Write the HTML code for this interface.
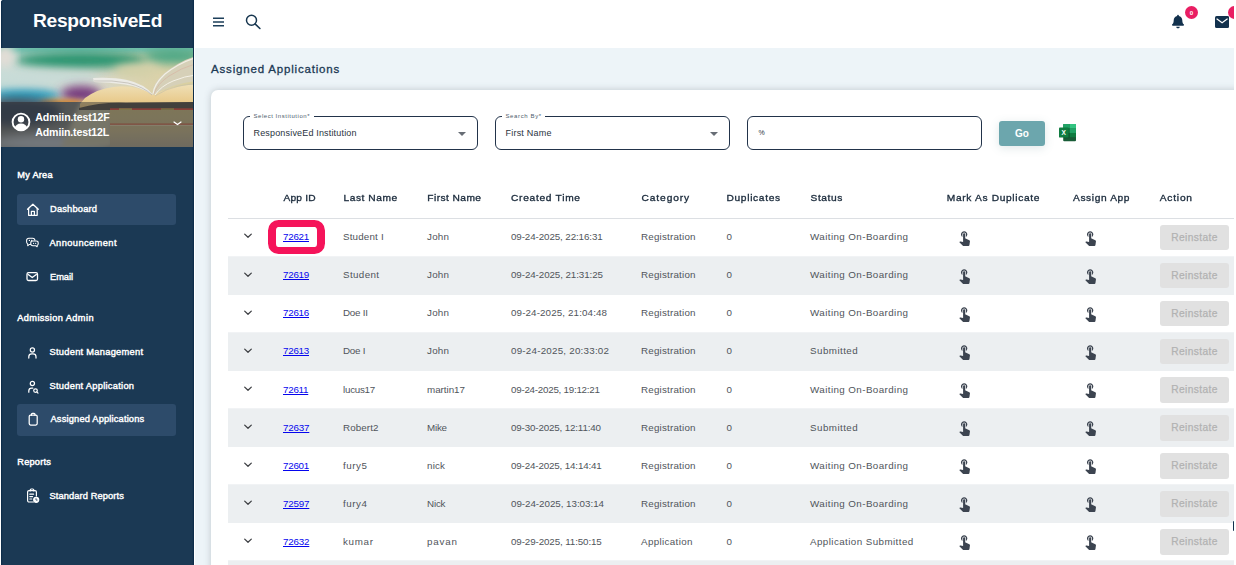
<!DOCTYPE html>
<html lang="en">
<head>
<meta charset="utf-8">
<title>Assigned Applications</title>
<style>
*{box-sizing:border-box;margin:0;padding:0}
html,body{width:1236px;height:565px;overflow:hidden;background:#fff;font-family:"Liberation Sans",sans-serif;}
body{position:relative}
#side{position:absolute;left:1px;top:0;width:193px;height:565px;background:#1b3954;border-top-left-radius:2.5px;overflow:hidden;box-shadow:inset 1.2px 0 0 #0e2d4a,inset -1.2px 0 0 #0e2d4a}
#brand{position:absolute;left:0;top:0;width:193px;height:48px;color:#fff;font-weight:700;font-size:19.2px;line-height:24px;text-align:center;padding-top:9px;white-space:nowrap}
#photo{position:absolute;left:0;top:48px;width:192px;height:99px;overflow:hidden}
#photo svg{position:absolute;left:0;top:0}
.uname{position:absolute;left:34.3px;color:#fff;font-weight:700;font-size:10.6px;line-height:12px;white-space:nowrap}
.slabel{position:absolute;left:16.3px;margin-top:1px;color:#fff;font-weight:400;-webkit-text-stroke:0.45px #fff;font-size:9.2px;line-height:10px;white-space:nowrap}
.sitem{position:absolute;left:16px;width:159px;height:31px;border-radius:3px;color:#fff;font-size:9.3px;font-weight:400;-webkit-text-stroke:0.4px #fff;line-height:31px;white-space:nowrap}
.sitem.on{background:#2d4b6a}
.sitem > span{position:absolute;left:33px;top:0}
.sitem svg{position:absolute;left:8px;top:8px;width:15px;height:15px;overflow:visible}
#top{position:absolute;left:194px;top:0;width:1040px;height:48px;background:#fff}
#main{position:absolute;left:195px;top:47.5px;width:1039px;height:518px;background:#edf4f8;overflow:hidden}
#title{position:absolute;left:211px;top:61.2px;font-size:11.5px;line-height:16px;color:#1b3954;font-weight:400;-webkit-text-stroke:0.3px #1b3954;white-space:nowrap}
#card{position:absolute;left:16px;top:42.5px;width:1040px;height:490px;background:#fff;border-radius:7px;box-shadow:0 0 7px rgba(95,105,115,0.32)}
.fld{position:absolute;top:116px;height:34px;border:1.3px solid #22334a;border-radius:6px;background:#fff}
.fld .lab{position:absolute;left:6px;top:-5.5px;background:#fff;padding:0 3.5px;font-size:6px;line-height:8px;color:#4d5c6c;white-space:nowrap}
.fld .val{position:absolute;left:9.5px;top:9.5px;font-size:9px;line-height:12px;color:#2a3340;white-space:nowrap}
.fld .car{position:absolute;margin-left:-1px;top:14.9px;width:0;height:0;border-left:4px solid transparent;border-right:4px solid transparent;border-top:4px solid #676d75}
#go{position:absolute;left:999px;top:121px;width:46px;height:25px;background:#6ca6ad;border-radius:3px;color:#fff;font-weight:700;font-size:10px;line-height:25px;text-align:center;box-shadow:0 2px 10px rgba(80,120,130,0.18)}
.th{position:absolute;top:191.3px;font-size:10.2px;line-height:14px;transform:scaleY(0.9);transform-origin:0 10.6px;color:#1b2b3c;font-weight:400;-webkit-text-stroke:0.35px #1b2b3c;white-space:nowrap}
#hline{position:absolute;left:228px;top:218px;width:1006px;height:1.2px;background:#dcdfe3}
.row{position:absolute;left:228px;width:1006px;height:38px;font-size:9.8px;line-height:37.6px;color:#50555b;white-space:nowrap}
.rbg{position:absolute;left:228px;width:1006px;height:38.8px;background:#eceff1;border-top:1.4px solid #f1f3f5}
.row .c{position:absolute;top:0}
.row a{color:#0505ee;text-decoration:underline;text-decoration-thickness:0.9px;text-underline-offset:1px}
.row .btn{position:absolute;left:932px;top:6.4px;width:69px;height:25.6px;background:#e1e1e1;border-radius:3px;color:#b2b2b2;font-size:10.2px;line-height:25.2px;text-align:center;font-weight:400;-webkit-text-stroke:0.25px #b2b2b2}
.row svg.chev{position:absolute;left:15px;top:14.1px;width:10px;height:8px}
.row svg.hand{position:absolute;top:10.2px;width:17px;height:17px}
#hl{position:absolute;left:268.4px;top:219.6px;width:56.2px;height:34.6px;border:7.4px solid #f5145a;border-left-width:8px;border-right-width:8px;border-radius:10.5px}
</style>
</head>
<body>
<div id="side">
  <div id="brand"><span style="letter-spacing:-0.250px">ResponsiveEd</span></div>
  <div id="photo">
    <svg width="193" height="99" viewBox="0 0 193 99">
      <defs>
        <filter id="b6" x="-30%" y="-80%" width="160%" height="260%"><feGaussianBlur stdDeviation="5"/></filter>
        <filter id="b3" x="-30%" y="-80%" width="160%" height="260%"><feGaussianBlur stdDeviation="2.600"/></filter>
        <filter id="b1" x="-10%" y="-30%" width="120%" height="160%"><feGaussianBlur stdDeviation="0.700"/></filter>
        <linearGradient id="pg" x1="0" y1="0" x2="1" y2="0">
          <stop offset="0" stop-color="#c9dcd7"/><stop offset="0.450" stop-color="#d6d8cf"/><stop offset="0.750" stop-color="#dcd3ae"/><stop offset="1" stop-color="#d9cf9f"/>
        </linearGradient>
        <linearGradient id="pcream" x1="0" y1="0" x2="0" y2="1">
          <stop offset="0" stop-color="#efe0b8"/><stop offset="1" stop-color="#e6c27c"/>
        </linearGradient>
        <linearGradient id="pstack" x1="0" y1="0" x2="0" y2="1">
          <stop offset="0" stop-color="#c6b47a"/><stop offset="0.550" stop-color="#bfae80"/><stop offset="1" stop-color="#a99e86"/>
        </linearGradient>
        <clipPath id="pc"><rect width="193" height="99"/></clipPath>
      </defs>
      <g clip-path="url(#pc)">
      <rect width="193" height="99" fill="url(#pg)"/>
      <rect x="-5" y="-4" width="203" height="9" fill="#6fc0ae" filter="url(#b3)"/>
      <ellipse cx="80" cy="12" rx="66" ry="8.500" fill="#2a9470" filter="url(#b6)"/>
      <ellipse cx="172" cy="8" rx="30" ry="8" fill="#4fa886" filter="url(#b6)"/>
      <ellipse cx="4" cy="8" rx="10" ry="12" fill="#e2ddd6" filter="url(#b6)"/>
      <ellipse cx="135" cy="23" rx="22" ry="7" fill="#d3d0a8" filter="url(#b6)"/>
      <ellipse cx="24" cy="48" rx="36" ry="7.500" fill="#2a9fc0" filter="url(#b6)"/><ellipse cx="40" cy="30" rx="60" ry="6" fill="#c7dcd8" filter="url(#b6)"/>
      <ellipse cx="80" cy="46" rx="20" ry="8" fill="#74397c" filter="url(#b6)"/>
      <ellipse cx="62" cy="55" rx="24" ry="4" fill="#d58b35" filter="url(#b3)"/>
      <rect x="-5" y="54" width="120" height="50" fill="#7a7a74"/>
      <ellipse cx="15" cy="64" rx="46" ry="14" fill="#3d4a58" filter="url(#b6)"/>
      <ellipse cx="50" cy="95" rx="60" ry="9" fill="#b4b8ba" filter="url(#b6)"/><path d="M80 54 L112 54 L112 99 L60 99 Z" fill="#b9b296" filter="url(#b3)"/>
      <!-- book page -->
      <path d="M79 56 L84 50 Q96 41 112 39 Q135 36 152 47 Q170 38 195 36 L195 60 L79 60 Z" fill="url(#pcream)" filter="url(#b1)"/>
      <!-- left pages swoosh -->
      <path d="M92 30 Q112 29 126 32 Q144 36 152 47 Q140 39 124 36.500 Q108 34 93 34 Z" fill="#ecebe6" filter="url(#b1)"/>
      <path d="M93 33 Q112 32 127 35 Q143 39 151 47" fill="none" stroke="#b9b5ae" stroke-width="0.700"/>
      <!-- right fanned pages -->
      <path d="M152 47 Q150 38 160 28 Q176 14 195 8 L195 33 Q170 36 152 47 Z" fill="#d6d0b8" filter="url(#b1)"/>
      <path d="M152 46 Q153 36 164 26 Q178 15 194 10" fill="none" stroke="#f1efe6" stroke-width="1.200"/>
      <path d="M153 46 Q156 36 168 28 Q180 20 194 16" fill="none" stroke="#d7b9a6" stroke-width="0.800"/>
      <path d="M154 47 Q160 38 172 33 Q184 28 195 27" fill="none" stroke="#f3f0e6" stroke-width="1"/>
      <path d="M154 48 Q164 41 178 38 Q188 36 195 36" fill="none" stroke="#c9c2a8" stroke-width="0.700"/>
      <!-- book block below pages -->
      <path d="M78 60 Q100 54 125 55 L195 54 L195 62 L78 62 Z" fill="#5a5346"/>
      <rect x="109" y="61" width="90" height="40" fill="url(#pstack)"/>
      <rect x="109" y="60.300" width="90" height="1.700" fill="#d9503f"/><rect x="118" y="60.300" width="13" height="1.700" fill="#c9b25a"/><rect x="160" y="60.300" width="13" height="1.700" fill="#b9a552"/>
      <rect x="109" y="75.600" width="90" height="1.200" fill="#c8543a"/>
      <rect x="109" y="76.800" width="90" height="0.900" fill="#d9cca6"/>
      <rect x="0" y="54" width="193" height="45" fill="#262b31" fill-opacity="0.450"/>
      </g>
    </svg>

  </div>
  <svg style="position:absolute;left:9.600px;top:112.300px" width="20" height="20" viewBox="0 0 20 20"><defs><clipPath id="avc"><circle cx="10" cy="10" r="8.600"/></clipPath></defs><circle cx="10" cy="10" r="8.400" fill="none" stroke="#fff" stroke-width="1.900"/><circle cx="10" cy="7.200" r="3.200" fill="#fff"/><ellipse cx="10" cy="16.600" rx="6.200" ry="5" fill="#fff" clip-path="url(#avc)"/></svg>
  <div class="uname" style="top:111.4px"><span style="letter-spacing:-0.118px">Admiin.test12F</span></div>
  <div class="uname" style="top:125.6px"><span style="letter-spacing:-0.149px">Admiin.test12L</span></div>
  <svg style="position:absolute;left:171.700px;top:121.300px" width="9" height="5" viewBox="0 0 9 5"><path d="M1 1 L4.500 3.600 L8 1" fill="none" stroke="#fff" stroke-width="1.250" stroke-linecap="round" stroke-linejoin="round"/></svg>

  <div class="slabel" style="top:169px"><span style="letter-spacing:0.266px">My Area</span></div>
  <div class="sitem on" style="top:194px"><svg viewBox="0 0 15 15" fill="none" stroke="#fff" stroke-width="1.250" stroke-linejoin="round" stroke-linecap="round"><path d="M2.500 7.300 L7.900 2.200 L13.300 7.300"/><path d="M3.600 6.300 V13.300 H12.200 V6.300"/><path d="M6.400 13.300 V9.300 H9.400 V13.300"/></svg><span><span style="letter-spacing:0.189px">Dashboard</span></span></div>
  <div class="sitem" style="top:228px"><svg viewBox="0 0 15 15" fill="none" stroke="#fff" stroke-width="1.150" stroke-linejoin="round" stroke-linecap="round"><g transform="translate(0.700 -0.300) scale(0.920 0.840)"><path d="M5.300 10.500 H3.800 L2.200 12 V9.800 C1.400 9.300 1 8.400 1 7.500 V5.500 C1 4.100 2.100 3 3.500 3 H7.500 C8.900 3 10 4.100 10 5.500"/><path d="M7.800 6.300 H11.300 C12.600 6.300 13.600 7.300 13.600 8.600 V9.600 C13.600 10.500 13.200 11.200 12.500 11.600 V13.300 L11 12 H7.800 C6.500 12 5.500 11 5.500 9.700 V8.600 C5.500 7.300 6.500 6.300 7.800 6.300 Z"/><path d="M4 5.600h.1M6.500 5.600h.1M8.500 9.100h.1M10.800 9.100h.1" stroke-width="1.300"/></g></svg><span style="left:32.500px"><span style="letter-spacing:0.405px">Announcement</span></span></div>
  <div class="sitem" style="top:261.5px"><svg viewBox="0 0 15 15" fill="none" stroke="#fff" stroke-width="1.300" stroke-linejoin="round" stroke-linecap="round"><rect x="2" y="2.700" width="10.500" height="7.800" rx="1.500"/><path d="M3.200 4.500 L7.250 7.500 L11.300 4.500"/></svg><span><span style="letter-spacing:-0.037px">Email</span></span></div>
  <div class="slabel" style="top:312px"><span style="letter-spacing:0.409px">Admission Admin</span></div>
  <div class="sitem" style="top:337px"><svg viewBox="0 0 15 15" fill="none" stroke="#fff" stroke-width="1.250" stroke-linejoin="round" stroke-linecap="round"><circle cx="7.400" cy="4.900" r="2.100"/><path d="M3.800 13 V11.700 C3.800 10 5.100 8.900 6.800 8.900 H8 C9.700 8.900 11 10 11 11.700 V13"/></svg><span style="left:32.500px"><span style="letter-spacing:0.270px">Student Management</span></span></div>
  <div class="sitem" style="top:370.500px"><svg viewBox="0 0 15 15" fill="none" stroke="#fff" stroke-width="1.250" stroke-linejoin="round" stroke-linecap="round"><circle cx="7.400" cy="4.500" r="2.100"/><path d="M3.800 13.200 V11.800 C3.800 10.100 5.100 9 6.800 9 H7.800"/><circle cx="10.500" cy="11.600" r="1.800"/><path d="M11.900 13 L13 14.100"/></svg><span style="left:32.500px"><span style="letter-spacing:0.272px">Student Application</span></span></div>
  <div class="sitem on" style="top:404px;height:31.600px"><svg viewBox="0 0 15 15" fill="none" stroke="#fff" stroke-width="1.250" stroke-linejoin="round" stroke-linecap="round"><rect x="4.200" y="3" width="8" height="10" rx="1.400"/><path d="M6.400 3.300 V2.400 C6.400 1.800 6.800 1.400 7.400 1.400 H9 C9.600 1.400 10 1.800 10 2.400 V3.300"/></svg><span style="left:33.500px"><span style="letter-spacing:0.162px">Assigned Applications</span></span></div>
  <div class="slabel" style="top:456px"><span style="letter-spacing:0.238px">Reports</span></div>
  <div class="sitem" style="top:481px"><svg style="top:7.200px" viewBox="0 0 15 15" fill="none" stroke="#fff" stroke-width="1.200" stroke-linejoin="round" stroke-linecap="round"><path d="M8.400 14 H4 C3.200 14 2.600 13.400 2.600 12.600 V4 C2.600 3.200 3.200 2.600 4 2.600 H10 C10.800 2.600 11.400 3.200 11.400 4 V8"/><path d="M5.200 2.900 V2 C5.200 1.400 5.600 1 6.200 1 H7.800 C8.400 1 8.800 1.400 8.800 2 V2.900"/><path d="M4.800 6.200 H8.600 M4.800 8.600 H7.600 M4.800 11 H6.800"/><circle cx="11.200" cy="11.800" r="2.500" fill="#fff"/><path d="M11 10.600 V12.100 H12.200" stroke="#1b3954" stroke-width="0.800"/></svg><span style="left:32.500px"><span style="letter-spacing:0.102px">Standard Reports</span></span></div>
</div>

<div id="top">
  <svg style="position:absolute;left:18px;top:16px" width="14" height="12" viewBox="0 0 14 12"><path d="M1 2.300 H12 M1 6.050 H12 M1 9.800 H12" stroke="#1d3f5a" stroke-width="1.400" fill="none"/></svg>
  <svg style="position:absolute;left:50px;top:12px" width="20" height="20" viewBox="0 0 20 20"><circle cx="7.500" cy="8.300" r="5" fill="none" stroke="#17364f" stroke-width="1.500"/><path d="M11.300 12.100 L15.900 16.500" stroke="#17364f" stroke-width="1.600" stroke-linecap="round"/></svg>
  <svg style="position:absolute;left:978.300px;top:14.300px" width="12" height="15" viewBox="0 0 448 512"><path fill="#12314d" d="M224 512c35.320 0 63.970-28.650 63.970-64H160.030c0 35.350 28.650 64 63.970 64zm215.390-149.710c-19.320-20.760-55.470-51.990-55.470-154.290 0-77.700-54.480-139.900-127.940-155.160V32c0-17.670-14.320-32-31.980-32s-31.980 14.330-31.980 32v20.840C118.560 68.100 64.080 130.300 64.080 208c0 102.300-36.150 133.530-55.470 154.290-6 6.450-8.660 14.160-8.610 21.710.11 16.400 12.980 32 32.100 32h383.800c19.120 0 32-15.600 32.100-32 .05-7.550-2.610-15.270-8.610-21.710z"/></svg>
  <div style="position:absolute;left:990.900px;top:5.900px;width:13.200px;height:13.200px;border-radius:50%;background:#e91e63;color:#fff;font-size:6.200px;font-weight:700;line-height:13.200px;text-align:center">0</div>
  <svg style="position:absolute;left:1020.900px;top:15.900px" width="14.200" height="12" viewBox="0 0 14.200 12"><rect x="0" y="0" width="14.200" height="12" rx="1.600" fill="#12314d"/><path d="M2 3 L7.100 6.800 L12.200 3" fill="none" stroke="#fff" stroke-width="1.200" stroke-linejoin="round" stroke-linecap="round"/></svg>
  <div style="position:absolute;left:1034px;top:5.900px;width:6px;height:13.200px;overflow:hidden"><div style="width:13.200px;height:13.200px;border-radius:50%;background:#e91e63"></div></div>
</div>
<div id="main"><div id="card"></div></div>
<div id="title"><span style="letter-spacing:0.820px">Assigned Applications</span></div>

<div class="fld" style="left:243px;width:235px"><div class="lab"><span style="letter-spacing:0.536px">Select Institution*</span></div><div class="val"><span style="letter-spacing:0.171px">ResponsiveEd Institution</span></div><div class="car" style="left:214.500px"></div></div>
<div class="fld" style="left:495px;width:234.800px"><div class="lab"><span style="letter-spacing:0.620px">Search By*</span></div><div class="val"><span style="letter-spacing:0.220px">First Name</span></div><div class="car" style="left:214.500px"></div></div>
<div class="fld" style="left:747px;width:235px"><div class="val" style="font-size:7px;left:10.500px">%</div></div>
<div id="go">Go</div>
<svg style="position:absolute;left:1059px;top:124.400px" width="17" height="17.200" viewBox="0 0 17 17.200">
  <rect x="4.200" y="0" width="12.800" height="17.200" rx="1" fill="#185c37"/>
  <rect x="4.200" y="0" width="6.400" height="4.600" fill="#21a366"/><rect x="10.600" y="0" width="6.400" height="4.600" fill="#33c481"/>
  <rect x="4.200" y="4.600" width="6.400" height="4.400" fill="#107c41"/><rect x="10.600" y="4.600" width="6.400" height="4.400" fill="#21a366"/>
  <rect x="4.200" y="9" width="6.400" height="4.200" fill="#134e30"/><rect x="10.600" y="9" width="6.400" height="4.200" fill="#107c41"/>
  <rect x="5" y="3.800" width="5.600" height="10.600" fill="#0b4a28" opacity="0.350"/>
  <rect x="0" y="3.400" width="9.600" height="10.200" rx="0.900" fill="#107c41"/>
  <text x="4.800" y="11" font-family="Liberation Sans, sans-serif" font-weight="700" font-size="6.600" fill="#fff" text-anchor="middle">X</text>
</svg>

<div class="th" style="left:283.5px"><span style="letter-spacing:0.169px">App ID</span></div><div class="th" style="left:343.5px"><span style="letter-spacing:0.554px">Last Name</span></div><div class="th" style="left:427.3px"><span style="letter-spacing:0.432px">First Name</span></div><div class="th" style="left:511px"><span style="letter-spacing:0.713px">Created Time</span></div><div class="th" style="left:641.5px"><span style="letter-spacing:0.908px">Category</span></div><div class="th" style="left:726.5px"><span style="letter-spacing:0.669px">Duplicates</span></div><div class="th" style="left:810.5px"><span style="letter-spacing:0.582px">Status</span></div><div class="th" style="left:946.8px"><span style="letter-spacing:0.656px">Mark As Duplicate</span></div><div class="th" style="left:1073px"><span style="letter-spacing:0.613px">Assign App</span></div><div class="th" style="left:1159.8px"><span style="letter-spacing:0.774px">Action</span></div>
<div id="hline"></div>
<div class="row" style="top:218.4px"><svg class="chev" viewBox="0 0 10 8"><path d="M1.7 2.1 L5 5.3 L8.3 2.1" fill="none" stroke="#3f4145" stroke-width="1.3" stroke-linecap="round" stroke-linejoin="round"/></svg><div class="c" style="left:55px"><a><span style="letter-spacing:-0.250px">72621</span></a></div><div class="c" style="left:115px"><span style="letter-spacing:0.173px">Student I</span></div><div class="c" style="left:199px"><span style="letter-spacing:0.250px">John</span></div><div class="c" style="left:283px"><span style="letter-spacing:-0.105px">09-24-2025, 22:16:31</span></div><div class="c" style="left:413px"><span style="letter-spacing:0.202px">Registration</span></div><div class="c" style="left:498.5px"><span style="letter-spacing:0.000px">0</span></div><div class="c" style="left:582px"><span style="letter-spacing:0.412px">Waiting On-Boarding</span></div><svg class="hand" style="left:728.2px" viewBox="0 0 24 24" fill="#3c4450"><path d="M9 11.24V7.5C9 6.12 10.12 5 11.5 5S14 6.12 14 7.5v3.74c1.21-.81 2-2.18 2-3.74C16 5.010 13.99 3 11.5 3S7 5.010 7 7.5c0 1.56.79 2.93 2 3.740zm9.84 4.63l-4.54-2.26c-.17-.07-.35-.11-.54-.11H13v-6c0-.83-.67-1.500-1.500-1.500S10 6.670 10 7.500v10.740l-3.430-.72c-.08-.01-.15-.03-.24-.03-.31 0-.59.13-.79.33l-.79.8 4.940 4.940c.27.27.65.44 1.060.44h6.790c.75 0 1.330-.55 1.440-1.280l.75-5.270c.01-.07.02-.14.02-.2 0-.62-.38-1.160-.91-1.380z"/></svg><svg class="hand" style="left:853.7px" viewBox="0 0 24 24" fill="#3c4450"><path d="M9 11.24V7.5C9 6.12 10.12 5 11.5 5S14 6.12 14 7.5v3.74c1.21-.81 2-2.18 2-3.74C16 5.010 13.99 3 11.5 3S7 5.010 7 7.5c0 1.56.79 2.93 2 3.740zm9.84 4.63l-4.54-2.26c-.17-.07-.35-.11-.54-.11H13v-6c0-.83-.67-1.500-1.500-1.500S10 6.670 10 7.500v10.740l-3.430-.72c-.08-.01-.15-.03-.24-.03-.31 0-.59.13-.79.33l-.79.8 4.940 4.940c.27.27.65.44 1.060.44h6.790c.75 0 1.330-.55 1.440-1.280l.75-5.270c.01-.07.02-.14.02-.2 0-.62-.38-1.160-.91-1.380z"/></svg><div class="btn"><span style="letter-spacing:0.369px">Reinstate</span></div></div>
<div class="rbg" style="top:256.1px"></div><div class="row" style="top:256.43px"><svg class="chev" viewBox="0 0 10 8"><path d="M1.7 2.1 L5 5.3 L8.3 2.1" fill="none" stroke="#3f4145" stroke-width="1.3" stroke-linecap="round" stroke-linejoin="round"/></svg><div class="c" style="left:55px"><a><span style="letter-spacing:-0.250px">72619</span></a></div><div class="c" style="left:115px"><span style="letter-spacing:0.370px">Student</span></div><div class="c" style="left:199px"><span style="letter-spacing:0.250px">John</span></div><div class="c" style="left:283px"><span style="letter-spacing:-0.090px">09-24-2025, 21:31:25</span></div><div class="c" style="left:413px"><span style="letter-spacing:0.202px">Registration</span></div><div class="c" style="left:498.5px"><span style="letter-spacing:0.000px">0</span></div><div class="c" style="left:582px"><span style="letter-spacing:0.412px">Waiting On-Boarding</span></div><svg class="hand" style="left:728.2px" viewBox="0 0 24 24" fill="#3c4450"><path d="M9 11.24V7.5C9 6.12 10.12 5 11.5 5S14 6.12 14 7.5v3.74c1.21-.81 2-2.18 2-3.74C16 5.010 13.99 3 11.5 3S7 5.010 7 7.5c0 1.56.79 2.93 2 3.740zm9.84 4.63l-4.54-2.26c-.17-.07-.35-.11-.54-.11H13v-6c0-.83-.67-1.500-1.500-1.500S10 6.670 10 7.500v10.740l-3.430-.72c-.08-.01-.15-.03-.24-.03-.31 0-.59.13-.79.33l-.79.8 4.940 4.940c.27.27.65.44 1.060.44h6.790c.75 0 1.330-.55 1.440-1.280l.75-5.270c.01-.07.02-.14.02-.2 0-.62-.38-1.160-.91-1.380z"/></svg><svg class="hand" style="left:853.7px" viewBox="0 0 24 24" fill="#3c4450"><path d="M9 11.24V7.5C9 6.12 10.12 5 11.5 5S14 6.12 14 7.5v3.74c1.21-.81 2-2.18 2-3.74C16 5.010 13.99 3 11.5 3S7 5.010 7 7.5c0 1.56.79 2.93 2 3.740zm9.84 4.63l-4.54-2.26c-.17-.07-.35-.11-.54-.11H13v-6c0-.83-.67-1.500-1.500-1.500S10 6.670 10 7.500v10.740l-3.430-.72c-.08-.01-.15-.03-.24-.03-.31 0-.59.13-.79.33l-.79.8 4.940 4.940c.27.27.65.44 1.060.44h6.790c.75 0 1.330-.55 1.440-1.280l.75-5.270c.01-.07.02-.14.02-.2 0-.62-.38-1.160-.91-1.380z"/></svg><div class="btn"><span style="letter-spacing:0.369px">Reinstate</span></div></div>
<div class="row" style="top:294.46px"><svg class="chev" viewBox="0 0 10 8"><path d="M1.7 2.1 L5 5.3 L8.3 2.1" fill="none" stroke="#3f4145" stroke-width="1.3" stroke-linecap="round" stroke-linejoin="round"/></svg><div class="c" style="left:55px"><a><span style="letter-spacing:-0.250px">72616</span></a></div><div class="c" style="left:115px"><span style="letter-spacing:-0.250px">Doe II</span></div><div class="c" style="left:199px"><span style="letter-spacing:0.250px">John</span></div><div class="c" style="left:283px"><span style="letter-spacing:0.121px">09-24-2025, 21:04:48</span></div><div class="c" style="left:413px"><span style="letter-spacing:0.202px">Registration</span></div><div class="c" style="left:498.5px"><span style="letter-spacing:0.000px">0</span></div><div class="c" style="left:582px"><span style="letter-spacing:0.412px">Waiting On-Boarding</span></div><svg class="hand" style="left:728.2px" viewBox="0 0 24 24" fill="#3c4450"><path d="M9 11.24V7.5C9 6.12 10.12 5 11.5 5S14 6.12 14 7.5v3.74c1.21-.81 2-2.18 2-3.74C16 5.010 13.99 3 11.5 3S7 5.010 7 7.5c0 1.56.79 2.93 2 3.740zm9.84 4.63l-4.54-2.26c-.17-.07-.35-.11-.54-.11H13v-6c0-.83-.67-1.500-1.500-1.500S10 6.670 10 7.500v10.740l-3.430-.72c-.08-.01-.15-.03-.24-.03-.31 0-.59.13-.79.33l-.79.8 4.940 4.940c.27.27.65.44 1.060.44h6.790c.75 0 1.330-.55 1.440-1.280l.75-5.270c.01-.07.02-.14.02-.2 0-.62-.38-1.160-.91-1.380z"/></svg><svg class="hand" style="left:853.7px" viewBox="0 0 24 24" fill="#3c4450"><path d="M9 11.24V7.5C9 6.12 10.12 5 11.5 5S14 6.12 14 7.5v3.74c1.21-.81 2-2.18 2-3.74C16 5.010 13.99 3 11.5 3S7 5.010 7 7.5c0 1.56.79 2.93 2 3.740zm9.84 4.63l-4.54-2.26c-.17-.07-.35-.11-.54-.11H13v-6c0-.83-.67-1.500-1.500-1.500S10 6.670 10 7.500v10.740l-3.430-.72c-.08-.01-.15-.03-.24-.03-.31 0-.59.13-.79.33l-.79.8 4.940 4.940c.27.27.65.44 1.060.44h6.790c.75 0 1.330-.55 1.440-1.280l.75-5.270c.01-.07.02-.14.02-.2 0-.62-.38-1.160-.91-1.380z"/></svg><div class="btn"><span style="letter-spacing:0.369px">Reinstate</span></div></div>
<div class="rbg" style="top:332.1px"></div><div class="row" style="top:332.49px"><svg class="chev" viewBox="0 0 10 8"><path d="M1.7 2.1 L5 5.3 L8.3 2.1" fill="none" stroke="#3f4145" stroke-width="1.3" stroke-linecap="round" stroke-linejoin="round"/></svg><div class="c" style="left:55px"><a><span style="letter-spacing:-0.250px">72613</span></a></div><div class="c" style="left:115px"><span style="letter-spacing:-0.250px">Doe I</span></div><div class="c" style="left:199px"><span style="letter-spacing:0.250px">John</span></div><div class="c" style="left:283px"><span style="letter-spacing:0.226px">09-24-2025, 20:33:02</span></div><div class="c" style="left:413px"><span style="letter-spacing:0.202px">Registration</span></div><div class="c" style="left:498.5px"><span style="letter-spacing:0.000px">0</span></div><div class="c" style="left:582px"><span style="letter-spacing:0.447px">Submitted</span></div><svg class="hand" style="left:728.2px" viewBox="0 0 24 24" fill="#3c4450"><path d="M9 11.24V7.5C9 6.12 10.12 5 11.5 5S14 6.12 14 7.5v3.74c1.21-.81 2-2.18 2-3.74C16 5.010 13.99 3 11.5 3S7 5.010 7 7.5c0 1.56.79 2.93 2 3.740zm9.84 4.63l-4.54-2.26c-.17-.07-.35-.11-.54-.11H13v-6c0-.83-.67-1.500-1.500-1.500S10 6.670 10 7.500v10.740l-3.430-.72c-.08-.01-.15-.03-.24-.03-.31 0-.59.13-.79.33l-.79.8 4.940 4.940c.27.27.65.44 1.060.44h6.790c.75 0 1.330-.55 1.440-1.280l.75-5.270c.01-.07.02-.14.02-.2 0-.62-.38-1.160-.91-1.380z"/></svg><svg class="hand" style="left:853.7px" viewBox="0 0 24 24" fill="#3c4450"><path d="M9 11.24V7.5C9 6.12 10.12 5 11.5 5S14 6.12 14 7.5v3.74c1.21-.81 2-2.18 2-3.74C16 5.010 13.99 3 11.5 3S7 5.010 7 7.5c0 1.56.79 2.93 2 3.740zm9.84 4.63l-4.54-2.26c-.17-.07-.35-.11-.54-.11H13v-6c0-.83-.67-1.500-1.500-1.500S10 6.670 10 7.500v10.740l-3.430-.72c-.08-.01-.15-.03-.24-.03-.31 0-.59.13-.79.33l-.79.8 4.940 4.940c.27.27.65.44 1.060.44h6.790c.75 0 1.330-.55 1.440-1.280l.75-5.270c.01-.07.02-.14.02-.2 0-.62-.38-1.160-.91-1.380z"/></svg><div class="btn"><span style="letter-spacing:0.369px">Reinstate</span></div></div>
<div class="row" style="top:370.52px"><svg class="chev" viewBox="0 0 10 8"><path d="M1.7 2.1 L5 5.3 L8.3 2.1" fill="none" stroke="#3f4145" stroke-width="1.3" stroke-linecap="round" stroke-linejoin="round"/></svg><div class="c" style="left:55px"><a><span style="letter-spacing:-0.250px">72611</span></a></div><div class="c" style="left:115px"><span style="letter-spacing:-0.250px">lucus17</span></div><div class="c" style="left:199px"><span style="letter-spacing:-0.018px">martin17</span></div><div class="c" style="left:283px"><span style="letter-spacing:-0.250px">09-24-2025, 19:12:21</span></div><div class="c" style="left:413px"><span style="letter-spacing:0.202px">Registration</span></div><div class="c" style="left:498.5px"><span style="letter-spacing:0.000px">0</span></div><div class="c" style="left:582px"><span style="letter-spacing:0.412px">Waiting On-Boarding</span></div><svg class="hand" style="left:728.2px" viewBox="0 0 24 24" fill="#3c4450"><path d="M9 11.24V7.5C9 6.12 10.12 5 11.5 5S14 6.12 14 7.5v3.74c1.21-.81 2-2.18 2-3.74C16 5.010 13.99 3 11.5 3S7 5.010 7 7.5c0 1.56.79 2.93 2 3.740zm9.84 4.63l-4.54-2.26c-.17-.07-.35-.11-.54-.11H13v-6c0-.83-.67-1.500-1.500-1.500S10 6.670 10 7.500v10.740l-3.430-.72c-.08-.01-.15-.03-.24-.03-.31 0-.59.13-.79.33l-.79.8 4.940 4.940c.27.27.65.44 1.060.44h6.790c.75 0 1.330-.55 1.440-1.280l.75-5.270c.01-.07.02-.14.02-.2 0-.62-.38-1.160-.91-1.380z"/></svg><svg class="hand" style="left:853.7px" viewBox="0 0 24 24" fill="#3c4450"><path d="M9 11.24V7.5C9 6.12 10.12 5 11.5 5S14 6.12 14 7.5v3.74c1.21-.81 2-2.18 2-3.74C16 5.010 13.99 3 11.5 3S7 5.010 7 7.5c0 1.56.79 2.93 2 3.740zm9.84 4.63l-4.54-2.26c-.17-.07-.35-.11-.54-.11H13v-6c0-.83-.67-1.500-1.500-1.500S10 6.670 10 7.500v10.740l-3.430-.72c-.08-.01-.15-.03-.24-.03-.31 0-.59.13-.79.33l-.79.8 4.940 4.940c.27.27.65.44 1.060.44h6.790c.75 0 1.330-.55 1.440-1.280l.75-5.270c.01-.07.02-.14.02-.2 0-.62-.38-1.160-.91-1.380z"/></svg><div class="btn"><span style="letter-spacing:0.369px">Reinstate</span></div></div>
<div class="rbg" style="top:408.1px"></div><div class="row" style="top:408.55px"><svg class="chev" viewBox="0 0 10 8"><path d="M1.7 2.1 L5 5.3 L8.3 2.1" fill="none" stroke="#3f4145" stroke-width="1.3" stroke-linecap="round" stroke-linejoin="round"/></svg><div class="c" style="left:55px"><a><span style="letter-spacing:-0.188px">72637</span></a></div><div class="c" style="left:115px"><span style="letter-spacing:0.107px">Robert2</span></div><div class="c" style="left:199px"><span style="letter-spacing:-0.229px">Mike</span></div><div class="c" style="left:283px"><span style="letter-spacing:-0.156px">09-30-2025, 12:11:40</span></div><div class="c" style="left:413px"><span style="letter-spacing:0.202px">Registration</span></div><div class="c" style="left:498.5px"><span style="letter-spacing:0.000px">0</span></div><div class="c" style="left:582px"><span style="letter-spacing:0.447px">Submitted</span></div><svg class="hand" style="left:728.2px" viewBox="0 0 24 24" fill="#3c4450"><path d="M9 11.24V7.5C9 6.12 10.12 5 11.5 5S14 6.12 14 7.5v3.74c1.21-.81 2-2.18 2-3.74C16 5.010 13.99 3 11.5 3S7 5.010 7 7.5c0 1.56.79 2.93 2 3.740zm9.84 4.63l-4.54-2.26c-.17-.07-.35-.11-.54-.11H13v-6c0-.83-.67-1.500-1.500-1.500S10 6.670 10 7.500v10.740l-3.430-.72c-.08-.01-.15-.03-.24-.03-.31 0-.59.13-.79.33l-.79.8 4.940 4.940c.27.27.65.44 1.060.44h6.790c.75 0 1.330-.55 1.440-1.280l.75-5.270c.01-.07.02-.14.02-.2 0-.62-.38-1.160-.91-1.380z"/></svg><svg class="hand" style="left:853.7px" viewBox="0 0 24 24" fill="#3c4450"><path d="M9 11.24V7.5C9 6.12 10.12 5 11.5 5S14 6.12 14 7.5v3.74c1.21-.81 2-2.18 2-3.74C16 5.010 13.99 3 11.5 3S7 5.010 7 7.5c0 1.56.79 2.93 2 3.740zm9.84 4.63l-4.54-2.26c-.17-.07-.35-.11-.54-.11H13v-6c0-.83-.67-1.500-1.500-1.500S10 6.670 10 7.500v10.740l-3.430-.72c-.08-.01-.15-.03-.24-.03-.31 0-.59.13-.79.33l-.79.8 4.940 4.940c.27.27.65.44 1.060.44h6.790c.75 0 1.330-.55 1.440-1.280l.75-5.270c.01-.07.02-.14.02-.2 0-.62-.38-1.160-.91-1.380z"/></svg><div class="btn"><span style="letter-spacing:0.369px">Reinstate</span></div></div>
<div class="row" style="top:446.58px"><svg class="chev" viewBox="0 0 10 8"><path d="M1.7 2.1 L5 5.3 L8.3 2.1" fill="none" stroke="#3f4145" stroke-width="1.3" stroke-linecap="round" stroke-linejoin="round"/></svg><div class="c" style="left:55px"><a><span style="letter-spacing:-0.250px">72601</span></a></div><div class="c" style="left:115px"><span style="letter-spacing:0.555px">fury5</span></div><div class="c" style="left:199px"><span style="letter-spacing:0.188px">nick</span></div><div class="c" style="left:283px"><span style="letter-spacing:-0.153px">09-24-2025, 14:14:41</span></div><div class="c" style="left:413px"><span style="letter-spacing:0.202px">Registration</span></div><div class="c" style="left:498.5px"><span style="letter-spacing:0.000px">0</span></div><div class="c" style="left:582px"><span style="letter-spacing:0.412px">Waiting On-Boarding</span></div><svg class="hand" style="left:728.2px" viewBox="0 0 24 24" fill="#3c4450"><path d="M9 11.24V7.5C9 6.12 10.12 5 11.5 5S14 6.12 14 7.5v3.74c1.21-.81 2-2.18 2-3.74C16 5.010 13.99 3 11.5 3S7 5.010 7 7.5c0 1.56.79 2.93 2 3.740zm9.84 4.63l-4.54-2.26c-.17-.07-.35-.11-.54-.11H13v-6c0-.83-.67-1.500-1.500-1.500S10 6.670 10 7.500v10.740l-3.430-.72c-.08-.01-.15-.03-.24-.03-.31 0-.59.13-.79.33l-.79.8 4.940 4.940c.27.27.65.44 1.060.44h6.790c.75 0 1.330-.55 1.440-1.280l.75-5.270c.01-.07.02-.14.02-.2 0-.62-.38-1.160-.91-1.380z"/></svg><svg class="hand" style="left:853.7px" viewBox="0 0 24 24" fill="#3c4450"><path d="M9 11.24V7.5C9 6.12 10.12 5 11.5 5S14 6.12 14 7.5v3.74c1.21-.81 2-2.18 2-3.74C16 5.010 13.99 3 11.5 3S7 5.010 7 7.5c0 1.56.79 2.93 2 3.740zm9.84 4.63l-4.54-2.26c-.17-.07-.35-.11-.54-.11H13v-6c0-.83-.67-1.500-1.500-1.500S10 6.670 10 7.500v10.740l-3.430-.72c-.08-.01-.15-.03-.24-.03-.31 0-.59.13-.79.33l-.79.8 4.940 4.940c.27.27.65.44 1.060.44h6.790c.75 0 1.330-.55 1.440-1.280l.75-5.270c.01-.07.02-.14.02-.2 0-.62-.38-1.160-.91-1.380z"/></svg><div class="btn"><span style="letter-spacing:0.369px">Reinstate</span></div></div>
<div class="rbg" style="top:484.1px"></div><div class="row" style="top:484.61px"><svg class="chev" viewBox="0 0 10 8"><path d="M1.7 2.1 L5 5.3 L8.3 2.1" fill="none" stroke="#3f4145" stroke-width="1.3" stroke-linecap="round" stroke-linejoin="round"/></svg><div class="c" style="left:55px"><a><span style="letter-spacing:-0.188px">72597</span></a></div><div class="c" style="left:115px"><span style="letter-spacing:0.555px">fury4</span></div><div class="c" style="left:199px"><span style="letter-spacing:-0.188px">Nick</span></div><div class="c" style="left:283px"><span style="letter-spacing:-0.037px">09-24-2025, 13:03:14</span></div><div class="c" style="left:413px"><span style="letter-spacing:0.202px">Registration</span></div><div class="c" style="left:498.5px"><span style="letter-spacing:0.000px">0</span></div><div class="c" style="left:582px"><span style="letter-spacing:0.412px">Waiting On-Boarding</span></div><svg class="hand" style="left:728.2px" viewBox="0 0 24 24" fill="#3c4450"><path d="M9 11.24V7.5C9 6.12 10.12 5 11.5 5S14 6.12 14 7.5v3.74c1.21-.81 2-2.18 2-3.74C16 5.010 13.99 3 11.5 3S7 5.010 7 7.5c0 1.56.79 2.93 2 3.740zm9.84 4.63l-4.54-2.26c-.17-.07-.35-.11-.54-.11H13v-6c0-.83-.67-1.500-1.500-1.500S10 6.670 10 7.500v10.740l-3.430-.72c-.08-.01-.15-.03-.24-.03-.31 0-.59.13-.79.33l-.79.8 4.940 4.940c.27.27.65.44 1.060.44h6.790c.75 0 1.330-.55 1.440-1.280l.75-5.270c.01-.07.02-.14.02-.2 0-.62-.38-1.160-.91-1.380z"/></svg><svg class="hand" style="left:853.7px" viewBox="0 0 24 24" fill="#3c4450"><path d="M9 11.24V7.5C9 6.12 10.12 5 11.5 5S14 6.12 14 7.5v3.74c1.21-.81 2-2.18 2-3.74C16 5.010 13.99 3 11.5 3S7 5.010 7 7.5c0 1.56.79 2.93 2 3.740zm9.84 4.63l-4.54-2.26c-.17-.07-.35-.11-.54-.11H13v-6c0-.83-.67-1.500-1.500-1.500S10 6.670 10 7.500v10.740l-3.430-.72c-.08-.01-.15-.03-.24-.03-.31 0-.59.13-.79.33l-.79.8 4.940 4.940c.27.27.65.44 1.060.44h6.790c.75 0 1.330-.55 1.440-1.280l.75-5.270c.01-.07.02-.14.02-.2 0-.62-.38-1.160-.91-1.380z"/></svg><div class="btn"><span style="letter-spacing:0.369px">Reinstate</span></div></div>
<div class="row" style="top:522.64px"><svg class="chev" viewBox="0 0 10 8"><path d="M1.7 2.1 L5 5.3 L8.3 2.1" fill="none" stroke="#3f4145" stroke-width="1.3" stroke-linecap="round" stroke-linejoin="round"/></svg><div class="c" style="left:55px"><a><span style="letter-spacing:-0.188px">72632</span></a></div><div class="c" style="left:115px"><span style="letter-spacing:0.691px">kumar</span></div><div class="c" style="left:199px"><span style="letter-spacing:0.824px">pavan</span></div><div class="c" style="left:283px"><span style="letter-spacing:-0.114px">09-29-2025, 11:50:15</span></div><div class="c" style="left:413px"><span style="letter-spacing:0.356px">Application</span></div><div class="c" style="left:498.5px"><span style="letter-spacing:0.000px">0</span></div><div class="c" style="left:582px"><span style="letter-spacing:0.422px">Application Submitted</span></div><svg class="hand" style="left:728.2px" viewBox="0 0 24 24" fill="#3c4450"><path d="M9 11.24V7.5C9 6.12 10.12 5 11.5 5S14 6.12 14 7.5v3.74c1.21-.81 2-2.18 2-3.74C16 5.010 13.99 3 11.5 3S7 5.010 7 7.5c0 1.56.79 2.93 2 3.740zm9.84 4.63l-4.54-2.26c-.17-.07-.35-.11-.54-.11H13v-6c0-.83-.67-1.500-1.500-1.500S10 6.670 10 7.500v10.740l-3.430-.72c-.08-.01-.15-.03-.24-.03-.31 0-.59.13-.79.33l-.79.8 4.940 4.940c.27.27.65.44 1.060.44h6.790c.75 0 1.330-.55 1.440-1.280l.75-5.270c.01-.07.02-.14.02-.2 0-.62-.38-1.160-.91-1.380z"/></svg><svg class="hand" style="left:853.7px" viewBox="0 0 24 24" fill="#3c4450"><path d="M9 11.24V7.5C9 6.12 10.12 5 11.5 5S14 6.12 14 7.5v3.74c1.21-.81 2-2.18 2-3.74C16 5.010 13.99 3 11.5 3S7 5.010 7 7.5c0 1.56.79 2.93 2 3.740zm9.84 4.63l-4.54-2.26c-.17-.07-.35-.11-.54-.11H13v-6c0-.83-.67-1.500-1.500-1.500S10 6.670 10 7.500v10.740l-3.430-.72c-.08-.01-.15-.03-.24-.03-.31 0-.59.13-.79.33l-.79.8 4.940 4.940c.27.27.65.44 1.060.44h6.790c.75 0 1.330-.55 1.440-1.280l.75-5.270c.01-.07.02-.14.02-.2 0-.62-.38-1.160-.91-1.380z"/></svg><div class="btn"><span style="letter-spacing:0.369px">Reinstate</span></div></div>
<div class="rbg" style="top:560.1px"></div>
<div id="hl"></div>
<div style="position:absolute;left:1232.500px;top:521px;width:1.500px;height:9.500px;background:#12314d;border-radius:1px 0 0 1px"></div>
</body>
</html>
